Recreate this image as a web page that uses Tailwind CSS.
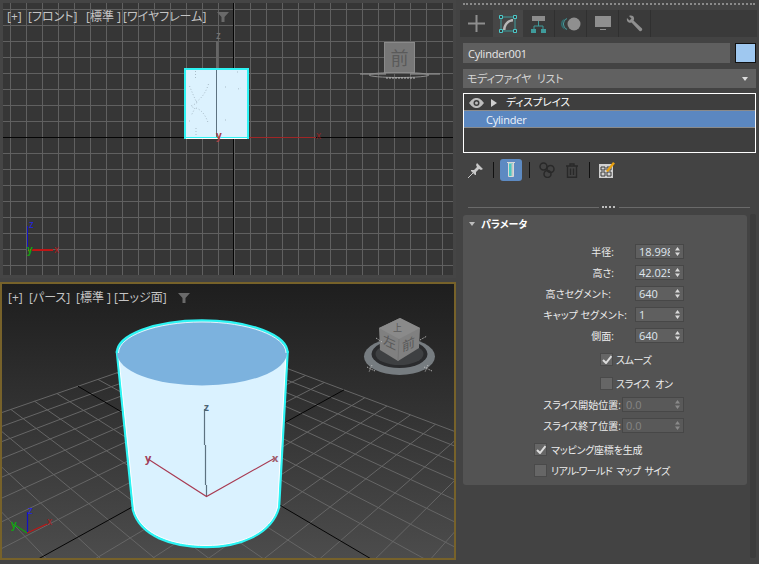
<!doctype html>
<html lang="ja">
<head>
    <meta charset="UTF-8" />
    <title>Modify panel</title>
    <script src="https://cdn.jsdelivr.net/npm/@tailwindcss/browser@4"></script>
</head>
<body class="bg-[#434343]">
<div class="w-[759px] h-[564px] overflow-hidden flex bg-[#434343] text-[11px] text-[#d8d8d8] [font-feature-settings:'palt'] font-['Open_Sans','Noto_Sans_CJK_JP',sans-serif]">

    <!-- Viewports -->
    <div class="w-[456px] flex flex-col gap-[4px] shrink-0">
        <!-- Front -->
        <div class="relative h-[278px] border-[3px] border-[#454545] bg-[#363636]">
            <svg class="block w-full h-full" viewBox="3 3 450 272" shape-rendering="crispEdges">
                <defs>
                    <pattern id="frontgrid" x="10" y="9" width="16" height="16" patternUnits="userSpaceOnUse">
                        <path d="M.5 0V16M0 .5H16" stroke="#606060" fill="none" />
                    </pattern>
                </defs>
                <rect x="3" y="3" width="450" height="272" fill="url(#frontgrid)" />
                <path d="M233.5 3V276M3 137.5H454" stroke="#050505" />
                <path d="M216.5 41V68" stroke="#666" stroke-width="2" />
                <rect x="185" y="69" width="63" height="69" fill="#dcf2fe" stroke="#2df3f3" stroke-width="2" />
                <path d="M186 138H247" stroke="#fff" />
                <path d="M216.5 70V137" stroke="#5d7280" stroke-width="1.5" />
                <g shape-rendering="auto" fill="none" stroke="#a9bcc8" stroke-width="1" stroke-dasharray="1 2">
                    <path d="M195.500 71V80M189.500 86C192 92 194 97 197 103L191 106L194 108M208.500 84C206 92 202 98 196 102" />
                    <path d="M196 108C202 110 206 116 208.500 124M195 108L191 116M189 121H190M196 128V135M238 89L241 88M225 87H226M225 120H226M237 72H238" />
                </g>
                <path d="M249 137.500H316" stroke="#a02626" />
                <path d="M27.500 226V250" stroke="#1212c4" />
                <path d="M28 250H53" stroke="#c01515" stroke-width="1.500" />
            </svg>
            <div class="absolute left-[4px] top-[6px] flex items-center whitespace-nowrap h-[16px] text-[12px] text-[#c4c4c4]">
                <span class="w-[21px]">[+]</span>
                <span class="w-[58px]">[フロント]</span>
                <span class="w-[37px]">[標準 ]</span>
                <span class="w-[94px]">[ワイヤフレーム]</span>
                <svg width="12" height="12" viewBox="0 0 12 12"><path d="M0 1H12L7.500 6V11H4.500V6Z" fill="#6a6a6a" /></svg>
            </div>
            <span class="absolute left-[213px] top-[26px] leading-[12px] text-[10px] text-[#7a7a7a]">z</span>
            <span class="absolute left-[313px] top-[126px] leading-[12px] text-[10px] text-[#8e2323]">x</span>
            <span class="absolute left-[213px] top-[126px] leading-[12px] text-[10px] font-bold text-[#a84040]">y</span>
            <span class="absolute left-[26px] top-[215px] leading-[12px] text-[10px] text-[#2424e8]">z</span>
            <span class="absolute left-[24px] top-[240px] leading-[12px] text-[10px] font-bold text-[#12a012]">y</span>
            <span class="absolute left-[51px] top-[240px] leading-[12px] text-[10px] text-[#b01a1a]">x</span>
            <!-- view cube -->
            <div class="absolute left-[381px] top-[39px] w-[31px] h-[31px] flex items-center justify-center border border-[#8a8a8a] bg-[#777] text-[18px] leading-none text-[#5a5a5a]">前</div>
            <svg class="absolute left-[355px] top-[68px]" width="84" height="12" viewBox="0 0 84 12">
                <path d="M2 3H28M52 3H82" stroke="#a0a0a0" />
                <ellipse cx="41" cy="4" rx="30" ry="2.500" fill="none" stroke="#8d8d8d" />
                <path d="M28 7H58" stroke="#c0c0c0" stroke-dasharray="2 1" />
            </svg>
        </div>

        <!-- Perspective -->
        <div class="relative h-[278px] border-2 border-[#77622a] bg-gradient-to-b from-[#1e1e1e] to-[#4c4c4c]">
            <svg class="block w-full h-full" viewBox="2 284 452 274">
                <g id="floor" fill="none"></g>
                <path d="M117 352L133 510C140 536 172 547 206 547C240 547 272 534 279 507L287.500 352Z" fill="#daf2ff" stroke="#2df3f3" stroke-width="2.500" />
                <path d="M118.500 354L134.500 510C141 534 172 545.500 206 545.500C240 545.500 271 533 277.500 507L286 354" fill="none" stroke="#fff" stroke-width="1" />
                <ellipse cx="202" cy="353" rx="85" ry="32.500" fill="#7cb2de" />
                <path d="M117 353C117 335 155 320.500 202 320.500C249 320.500 287.500 335 287.500 353" fill="none" stroke="#2df3f3" stroke-width="2.500" />
                <path d="M118.500 353C118.500 336 156 322 202 322C248 322 286 336 286 353" fill="none" stroke="#fff" stroke-width=".8" />
                <path d="M204.500 409V445M205.500 445V485M206.500 485V496" fill="none" stroke="#5d7280" stroke-width="1.200" />
                <path d="M148 459L206.500 496.500L275 458" fill="none" stroke="#a83a52" stroke-width="1.100" />
                <path d="M27.500 512V533" stroke="#1212c4" stroke-width="1.200" />
                <path d="M27 533L47 524" stroke="#c01515" stroke-width="1.200" />
                <path d="M27 533L15 525" stroke="#12a012" stroke-width="1.200" />
                <!-- view cube -->
                <ellipse cx="399.500" cy="356.500" rx="35.500" ry="18.500" fill="#767c80" />
                <ellipse cx="399.500" cy="354" rx="28" ry="14" fill="#2a2b2d" />
                <ellipse cx="399.500" cy="354" rx="24" ry="11" fill="#3e4042" />
                <path d="M379 328L400 318L420 328L419 348L398 361L380 350Z" fill="#808080" />
                <path d="M379 328L400 318L420 328L399 339Z" fill="#8a8a8a" />
                <path d="M399 339L398 361" stroke="#747474" />
                <g fill="none" stroke="#c6c6c6" stroke-width="1" stroke-dasharray="1 1">
                    <path d="M367 367L375 371M372 365L369 372M424 367L432 371M428 365L425 372M376 338L382 342M420 340L427 336" />
                </g>
            </svg>
            <div class="absolute left-[6px] top-[6px] flex items-center whitespace-nowrap h-[16px] text-[12px] text-[#c4c4c4]">
                <span class="w-[21px]">[+]</span>
                <span class="w-[47px]">[パース]</span>
                <span class="w-[38px]">[標準 ]</span>
                <span class="w-[64px]">[エッジ面]</span>
                <svg width="12" height="12" viewBox="0 0 12 12"><path d="M0 1H12L7.500 6V11H4.500V6Z" fill="#6a6a6a" /></svg>
            </div>
            <span class="absolute left-[202px] top-[117px] leading-[12px] text-[10px] font-bold text-[#4d6473]">z</span>
            <span class="absolute left-[143px] top-[168px] leading-[12px] text-[11px] font-bold text-[#a0405a]">y</span>
            <span class="absolute left-[270px] top-[168px] leading-[12px] text-[11px] font-bold text-[#a0606e]">x</span>
            <span class="absolute left-[26px] top-[220px] leading-[12px] text-[10px] text-[#2424e8]">z</span>
            <span class="absolute left-[9px] top-[234px] leading-[12px] text-[10px] font-bold text-[#12a012]">y</span>
            <span class="absolute left-[45px] top-[231px] leading-[12px] text-[10px] text-[#b01a1a]">x</span>
            <span class="absolute left-[391px] top-[39px] leading-[10px] text-[9px] text-[#5a5a5a]">上</span>
            <span class="absolute left-[381px] top-[52px] leading-[13px] text-[13px] text-[#5a5a5a] skew-y-[25deg]">左</span>
            <span class="absolute left-[400px] top-[54px] leading-[13px] text-[13px] text-[#5a5a5a] -skew-y-[25deg]">前</span>
        </div>
    </div>

    <!-- Command panel -->
    <div class="ml-[4px] w-[299px] shrink-0 pt-[3px]">
        <div class="ml-[3px] w-[292px] border-t-2 border-dotted border-[#8a8a8a]"></div>

        <!-- Tabs -->
        <div class="mt-[5px] w-[297px] h-[27px] bg-[#3a3a3a] flex items-stretch">
            <div class="w-[33px] flex items-center justify-center">
                <svg width="17" height="17" viewBox="0 0 17 17"><path d="M8.500 0V17M0 8.500H17" stroke="#8e8e8e" stroke-width="2" /></svg>
            </div>
            <div class="w-[30px] bg-[#464646] flex items-center justify-center">
                <svg width="18" height="18" viewBox="0 0 18 18">
                    <path d="M2 2H16V16H2Z" fill="none" stroke="#3f9c9c" />
                    <path d="M4 15C4 9 9 4 14 4L14 6.500C10 6.500 6.500 10 6.500 15Z" fill="#b8b8b8" />
                    <path d="M.5.5h3v3h-3zM14.500.5h3v3h-3zM.5 14.500h3v3h-3zM14.500 14.500h3v3h-3z" fill="#3a3a3a" stroke="#4cc8c8" />
                </svg>
            </div>
            <div class="w-[32px] flex items-center justify-center border-r border-[#303030]">
                <svg width="16" height="18" viewBox="0 0 16 18">
                    <path d="M1 1H14V6H1Z" fill="#8c8c8c" />
                    <path d="M7.500 6V11M3 14V11H12V14" fill="none" stroke="#3f9c9c" />
                    <path d="M0 14H5V18H0ZM10 14H15V18H10Z" fill="#3f9c9c" />
                </svg>
            </div>
            <div class="w-[32px] flex items-center justify-center border-r border-[#303030]">
                <svg width="20" height="14" viewBox="0 0 20 14">
                    <circle cx="5.500" cy="7" r="5.500" fill="#2f6f72" />
                    <circle cx="7.500" cy="7" r="6" fill="#3a3a3a" />
                    <path d="M6 1.500A6 6 0 0 0 6 12.500" fill="none" stroke="#4a9a9c" />
                    <circle cx="13" cy="7" r="6.500" fill="#8f8f8f" />
                </svg>
            </div>
            <div class="w-[32px] flex items-center justify-center border-r border-[#303030]">
                <svg width="16" height="15" viewBox="0 0 16 15"><path d="M0 0H16V11H0ZM5 13H11V14H5Z" fill="#8f8f8f" /></svg>
            </div>
            <div class="w-[32px] flex items-center justify-center border-r border-[#303030]">
                <svg width="17" height="17" viewBox="0 0 17 17"><path d="M1 3L3.500 5.500L5.500 3.500L3 1C5 0 7.500 .5 8 3C8.200 4 8 5 7.500 5.500L16 13.500C17 15 15 17 13.500 16L5.500 7.500C3.500 8.500 0 7 1 3Z" fill="#8f8f8f" /></svg>
            </div>
        </div>

        <!-- Name and colour -->
        <div class="mt-[6px] ml-[3px] flex h-[20px] gap-[5px]">
            <div class="w-[267px] bg-[#5f5f5f] pl-[5px] leading-[22px] tracking-[-0.2px] text-[#e8e8e8]">Cylinder001</div>
            <div class="w-[21px] border border-[#111] bg-[#9fc8f0]"></div>
        </div>

        <!-- Modifier list -->
        <div class="mt-[6px] ml-[3px] w-[293px] h-[19px] bg-[#616161] pl-[4px] pr-[8px] flex items-center justify-between text-[#d4d4d4]">
            <span class="pt-[1px] tracking-[-0.3px] [word-spacing:3px]">モディファイヤ リスト</span>
            <span class="w-0 h-0 border-x-[3px] border-x-transparent border-t-[4px] border-t-[#dcdcdc]"></span>
        </div>

        <!-- Stack -->
        <div class="mt-[5px] ml-[3px] w-[293px] h-[60px] border border-white bg-[#3e3e3e]">
            <div class="h-[17px] flex items-center border-b border-[#8a8a8a] text-white">
                <svg class="ml-[5px] mt-[1px]" width="15" height="10" viewBox="0 0 15 10"><path d="M0 5C3 1 5 0 7.500 0S12 1 15 5C12 9 10 10 7.500 10S3 9 0 5Z" fill="#bdbdbd" /><circle cx="7.500" cy="5" r="3" fill="#3e3e3e" /><circle cx="7.500" cy="5" r="1.500" fill="#bdbdbd" /></svg>
                <span class="ml-[7px] mt-[1px] w-0 h-0 border-y-[4px] border-y-transparent border-l-[6px] border-l-[#cfcfcf]"></span>
                <span class="ml-[9px] pt-[2px] text-[10.500px]">ディスプレイス</span>
            </div>
            <div class="h-[17px] pl-[22px] leading-[18px] tracking-[-0.2px] bg-[#5b87c0] border-b border-[#8a8a8a] text-[#eef3fa]">Cylinder</div>
        </div>

        <!-- Stack tools -->
        <div class="mt-[6px] ml-[3px] h-[22px] flex items-center">
            <svg class="ml-[5px]" width="15" height="15" viewBox="0 0 15 15"><path d="M9 0L15 6L13 7L11 6L8 9L8 12L7 12L3 8L3 7L6 7L9 4L8 2Z" fill="#c8c8c8" /><path d="M5 10L0 15" stroke="#c8c8c8" /></svg>
            <span class="ml-[10px] w-px h-[16px] bg-[#111]"></span>
            <div class="ml-[6px] w-[22px] h-[22px] rounded-[3px] bg-[#5d8ac2] flex items-center justify-center">
                <svg width="8" height="16" viewBox="0 0 8 16"><path d="M0 .5H8" stroke="#d8d8d8" /><path d="M1.500 1V14.500H6.500V1Z" fill="#49c9c0" stroke="#d8d8d8" /><path d="M4.500 2V14H6V2Z" fill="#c8c8c8" /></svg>
            </div>
            <span class="ml-[7px] w-px h-[16px] bg-[#111]"></span>
            <svg class="ml-[9px]" width="16" height="16" viewBox="0 0 16 16" fill="none" stroke="#292929" stroke-width="1.500"><circle cx="4.500" cy="4.500" r="3.500" /><circle cx="11.500" cy="7" r="3.500" /><circle cx="8.500" cy="12" r="3.500" /></svg>
            <svg class="ml-[11px]" width="12" height="15" viewBox="0 0 12 15" fill="none" stroke="#292929" stroke-width="1.400"><path d="M0 3H12M4 3V1H8V3M1.500 3V14.300H10.500V3M4.500 5.500V12M7.500 5.500V12" /></svg>
            <span class="ml-[11px] w-px h-[16px] bg-[#111]"></span>
            <svg class="ml-[9px]" width="16" height="16" viewBox="0 0 16 16">
                <path d="M0 2H14V16H0Z" fill="#d0d0d0" />
                <path d="M2 5H6V8H2ZM8 5H12V8H8ZM2 10H6V14H2ZM8 10H12V14H8Z" fill="none" stroke="#3b3b3b" />
                <path d="M7 9L14 0L16 1.500L9 10Z" fill="#e8a010" />
            </svg>
        </div>

        <!-- Divider -->
        <div class="mt-[25px] ml-[8px] w-[282px] h-[2px] flex items-center">
            <span class="w-[131px] h-px bg-[#6a6a6a]"></span>
            <span class="ml-[3px] w-[13px] border-t-2 border-dotted border-[#bdbdbd]"></span>
            <span class="ml-[4px] w-[131px] h-px bg-[#6a6a6a]"></span>
        </div>

        <div class="mt-[7px] ml-[3px] flex items-start gap-[3px]">
            <!-- Rollout -->
            <div class="w-[284px] h-[270px] rounded-[3px] bg-[#535353] text-[10px] text-[#ececec]">
                <div class="h-[26px] flex items-start pt-[2px] relative">
                    <span class="mt-[5px] ml-[6px] w-0 h-0 border-x-[3.500px] border-x-transparent border-t-[4px] border-t-[#bdbdbd]"></span>
                    <span class="ml-[6px] font-bold text-white leading-[14px]">パラメータ</span>
                    <span class="absolute right-[8px] top-[6px] w-[6px] h-[6px] bg-[radial-gradient(#8a8a8a_45%,transparent_50%)] bg-[length:2px_2px]"></span>
                </div>

                <div class="flex items-center justify-end h-[21px] pr-[63px]"><span class="mr-[21px] pt-[1px]">半径:</span><div class="w-[49px] h-[15px] border border-[#474747] bg-[#5f5f5f] flex items-center pl-[3px] text-[11px] text-[#dfe6ee]"><span class="w-[31px] pt-[1px] overflow-hidden">18.998</span><svg class="ml-[5px]" width="5" height="9" viewBox="0 0 5 9"><path d="M2.500 0L5 3.500H0ZM2.500 9L5 5.500H0Z" fill="#dadada" /></svg></div></div>
                <div class="flex items-center justify-end h-[21px] pr-[63px]"><span class="mr-[21px] pt-[1px]">高さ:</span><div class="w-[49px] h-[15px] border border-[#474747] bg-[#5f5f5f] flex items-center pl-[3px] text-[11px] text-[#dfe6ee]"><span class="w-[31px] pt-[1px] overflow-hidden">42.025</span><svg class="ml-[5px]" width="5" height="9" viewBox="0 0 5 9"><path d="M2.500 0L5 3.500H0ZM2.500 9L5 5.500H0Z" fill="#dadada" /></svg></div></div>
                <div class="flex items-center justify-end h-[21px] pr-[63px]"><span class="mr-[24px] pt-[1px]">高さセグメント:</span><div class="w-[49px] h-[15px] border border-[#474747] bg-[#5f5f5f] flex items-center pl-[3px] text-[11px] text-[#dfe6ee]"><span class="w-[31px] pt-[1px] overflow-hidden">640</span><svg class="ml-[5px]" width="5" height="9" viewBox="0 0 5 9"><path d="M2.500 0L5 3.500H0ZM2.500 9L5 5.500H0Z" fill="#dadada" /></svg></div></div>
                <div class="flex items-center justify-end h-[21px] pr-[63px]"><span class="mr-[8px] pt-[1px]">キャップ セグメント:</span><div class="w-[49px] h-[15px] border border-[#474747] bg-[#5f5f5f] flex items-center pl-[3px] text-[11px] text-[#dfe6ee]"><span class="w-[31px] pt-[1px] overflow-hidden">1</span><svg class="ml-[5px]" width="5" height="9" viewBox="0 0 5 9"><path d="M2.500 0L5 3.500H0ZM2.500 9L5 5.500H0Z" fill="#dadada" /></svg></div></div>
                <div class="flex items-center justify-end h-[21px] pr-[63px]"><span class="mr-[21px] pt-[1px]">側面:</span><div class="w-[49px] h-[15px] border border-[#474747] bg-[#5f5f5f] flex items-center pl-[3px] text-[11px] text-[#dfe6ee]"><span class="w-[31px] pt-[1px] overflow-hidden">640</span><svg class="ml-[5px]" width="5" height="9" viewBox="0 0 5 9"><path d="M2.500 0L5 3.500H0ZM2.500 9L5 5.500H0Z" fill="#dadada" /></svg></div></div>

                <div class="mt-[3px] h-[21px] pl-[137px] flex items-center">
                    <span class="w-[13px] h-[13px] bg-[#666] border border-[#4a4a4a] flex items-center justify-center"><svg width="10" height="9" viewBox="0 0 10 9"><path d="M1 5L4 8L9.500 1" fill="none" stroke="#dcdcdc" stroke-width="2" /></svg></span>
                    <span class="ml-[3px] pt-[1px] tracking-[-0.4px]">スムーズ</span>
                </div>
                <div class="mt-[3px] h-[21px] pl-[137px] flex items-center">
                    <span class="w-[13px] h-[13px] bg-[#666] border border-[#4a4a4a]"></span>
                    <span class="ml-[3px] pt-[1px] tracking-[-0.3px] [word-spacing:3px]">スライス オン</span>
                </div>

                <div class="flex items-center justify-end h-[21px] pr-[63px]"><span class="mr-[1px] pt-[1px]">スライス開始位置:</span><div class="w-[62px] h-[15px] border border-[#474747] bg-[#595959] flex items-center pl-[3px] text-[11px] text-[#858585]"><span class="w-[44px] pt-[1px]">0.0</span><svg class="ml-[5px]" width="5" height="9" viewBox="0 0 5 9"><path d="M2.500 0L5 3.500H0ZM2.500 9L5 5.500H0Z" fill="#8a8a8a" /></svg></div></div>
                <div class="flex items-center justify-end h-[21px] pr-[63px]"><span class="mr-[1px] pt-[1px]">スライス終了位置:</span><div class="w-[62px] h-[15px] border border-[#474747] bg-[#595959] flex items-center pl-[3px] text-[11px] text-[#858585]"><span class="w-[44px] pt-[1px]">0.0</span><svg class="ml-[5px]" width="5" height="9" viewBox="0 0 5 9"><path d="M2.500 0L5 3.500H0ZM2.500 9L5 5.500H0Z" fill="#8a8a8a" /></svg></div></div>

                <div class="mt-[3px] h-[21px] pl-[71px] flex items-center">
                    <span class="w-[13px] h-[13px] bg-[#666] border border-[#4a4a4a] flex items-center justify-center"><svg width="10" height="9" viewBox="0 0 10 9"><path d="M1 5L4 8L9.500 1" fill="none" stroke="#dcdcdc" stroke-width="2" /></svg></span>
                    <span class="ml-[4px] pt-[1px] tracking-[-0.2px]">マッピング座標を生成</span>
                </div>
                <div class="h-[21px] pl-[71px] flex items-center">
                    <span class="w-[13px] h-[13px] bg-[#666] border border-[#4a4a4a]"></span>
                    <span class="ml-[4px] pt-[1px] tracking-[-0.6px] [word-spacing:2px]">リアル-ワールド マップ サイズ</span>
                </div>
            </div>

            <!-- Scrollbar -->
            <div class="w-[6px] h-[344px] -mt-[1px] rounded-[2px] bg-[#3c3c3c]"></div>
        </div>
    </div>
</div>

<script>
    // perspective floor grid, from the two vanishing points of the view
    const floor = document.getElementById('floor');
    const C = [210, 464], A = [803, 136], B = [-374, 120];
    const N = 8, k = 0.292 / N;

    function project(u, v) {
        const a = u * k, b = v * k, w = 1 + a + b;
        return [(C[0] + a * A[0] + b * B[0]) / w, (C[1] + a * A[1] + b * B[1]) / w];
    }

    function addLine(p, q, color) {
        const line = document.createElementNS('http://www.w3.org/2000/svg', 'line');
        line.setAttribute('x1', p[0]);
        line.setAttribute('y1', p[1]);
        line.setAttribute('x2', q[0]);
        line.setAttribute('y2', q[1]);
        line.setAttribute('stroke', color);
        floor.appendChild(line);
    }

    for (let i = -N; i <= N; i++) {
        if (i === 0) continue;
        addLine(project(i, -N), project(i, N), '#666666');
        addLine(project(-N, i), project(N, i), '#666666');
    }
    addLine(project(0, -N), project(0, N), '#050505');
    addLine(project(-N, 0), project(N, 0), '#050505');
</script>
</body>
</html>
